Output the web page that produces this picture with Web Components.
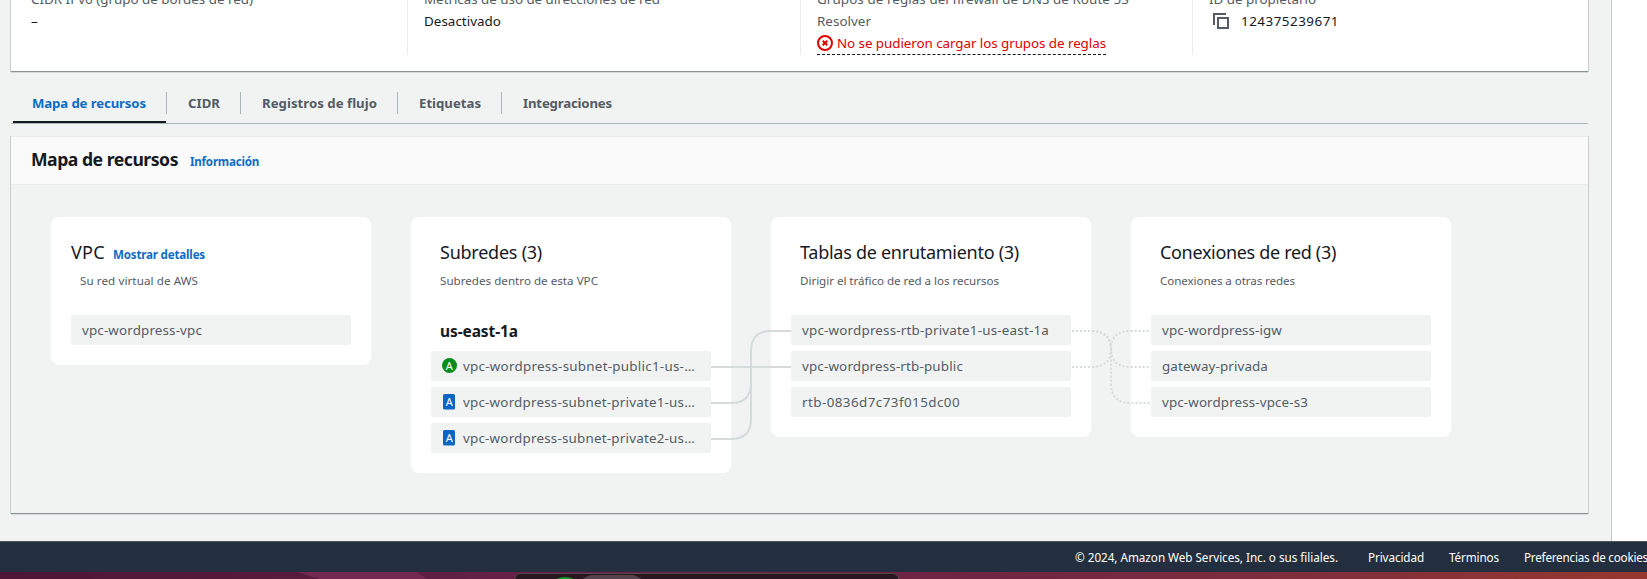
<!DOCTYPE html>
<html lang="es">
<head>
<meta charset="utf-8">
<title>Mapa de recursos</title>
<style>
html,body{margin:0;height:579px;overflow:hidden;background:#fff}
body{font-family:"Noto Sans","Open Sans",sans-serif;font-size:13.4px;line-height:22px;color:#16191f}
</style>
</head>
<body>
<console-page></console-page>
<script>
const define = (name, html, setup) => customElements.define(name, class extends HTMLElement {
  connectedCallback() {
    if (this.shadowRoot) return;
    const t = document.createElement('template');
    t.innerHTML = html;
    this.attachShadow({mode: 'open'}).append(t.content.cloneNode(true));
    if (setup) setup.call(this, this.shadowRoot);
  }
});

/* A single line of text whose tracking is adjusted to the width given in "w". */
define('fit-text', `<style>:host{display:inline-block;white-space:nowrap}span{display:inline-block}</style><span><slot></slot></span>`, function (root) {
  const span = root.querySelector('span'), w = +this.getAttribute('w');
  if (!w) return;
  const n = [...this.textContent].length;
  this.style.width = w + 'px';
  span.style.letterSpacing = (w - span.getBoundingClientRect().width) / n + 'px';
});

define('detail-column', `<style>
:host{display:block;box-sizing:border-box;height:67px;padding-left:16px;border-left:1px solid #eaeded;color:#16191f}
:host([first]){border:0;padding-left:20px}
::slotted(*){display:block!important;height:22px}
::slotted([label]){color:#545b64}
</style><slot></slot>`);

define('status-error', `<style>
:host{display:block;color:#df0000}
div{display:flex;width:289px;height:23px;box-sizing:border-box;gap:4px;border-bottom:1px dashed #16191f}
svg{flex:none;margin-top:3px}
</style><div><svg width="16" height="16" viewBox="0 0 16 16" fill="none" stroke="#df0000"><circle cx="8" cy="8" r="7" stroke-width="2"/><path d="M5.7 5.7l4.6 4.6M10.3 5.7l-4.6 4.6" stroke-width="2"/></svg><slot></slot></div>`);

define('copy-value', `<style>
:host{display:block}div{display:flex;gap:12px;padding-left:4px}svg{flex:none;margin-top:3px}
</style><div><svg width="16" height="16" viewBox="0 0 16 16" fill="none" stroke="#545b64" stroke-width="2"><path d="M5 5h10v10H5zM1 12V1h12"/></svg><slot></slot></div>`);

define('details-panel', `<style>
:host{display:grid;grid-template-columns:396px 393px 392px 396px;align-items:start;height:71px;overflow:hidden;background:#fff;box-shadow:-1px 0 0 #c9cfcf,1px 0 0 #c9cfcf,0 1px 0 #d5dbdb;border-bottom:1px solid #879596}
detail-column{margin-top:-12px}
</style>
<detail-column first><fit-text label w="222">CIDR IPv6 (grupo de bordes de red)</fit-text><fit-text>–</fit-text></detail-column>
<detail-column><fit-text label w="236">Métricas de uso de direcciones de red</fit-text><fit-text w="77">Desactivado</fit-text></detail-column>
<detail-column><fit-text label w="312">Grupos de reglas del firewall de DNS de Route 53</fit-text><fit-text label w="54">Resolver</fit-text><status-error><fit-text w="269">No se pudieron cargar los grupos de reglas</fit-text></status-error></detail-column>
<detail-column><fit-text label w="107">ID de propietario</fit-text><copy-value><fit-text w="98">124375239671</fit-text></copy-value></detail-column>`);

define('tab-item', `<style>
:host{display:flex;box-sizing:border-box;height:31px;color:#545b64;font-weight:700;font-size:13.2px}
div{padding:0 20px 0 21px;height:22px;border-right:1px solid #aab7b8}
:host([last]) div{border:0}
:host([active]){color:#0c6cc5;box-shadow:inset 0 -2px #16191f;width:153px;margin-left:2px;margin-right:1px}
:host([active]) div{padding:0 20px 0 19px;width:114px;flex:none}
</style><div><slot></slot></div>`);

define('tab-bar', `<style>:host{display:flex;box-sizing:border-box;height:32px;border-bottom:1px solid #aab7b8}</style>
<tab-item active><fit-text w="114">Mapa de recursos</fit-text></tab-item>
<tab-item><fit-text w="32">CIDR</fit-text></tab-item>
<tab-item><fit-text w="115">Registros de flujo</fit-text></tab-item>
<tab-item><fit-text w="62">Etiquetas</fit-text></tab-item>
<tab-item last><fit-text w="89">Integraciones</fit-text></tab-item>`);

define('resource-item', `<style>
:host{display:flex;align-items:center;box-sizing:border-box;height:30px;padding-left:11px;background:#f1f3f3;border-radius:2px;color:#545b64}
svg{flex:none;margin-right:6px}
text{font:11px "Noto Sans",sans-serif;fill:#fff}
</style><span id="i"></span><slot></slot>`, function (root) {
  const kind = this.getAttribute('kind');
  const shape = {public: '<circle cx="7.5" cy="7.5" r="7.5" fill="#078d1c"/>', private: '<rect x="1" width="12" height="15.5" rx="1.5" fill="#0a66c2"/>'}[kind];
  root.getElementById('i').style.display = 'contents';
  if (shape) root.getElementById('i').innerHTML = `<svg width="15" height="16" viewBox="0 0 15 16">${shape}<text x="7.3" y="11.7" text-anchor="middle">A</text></svg>`;
});

define('resource-card', `<style>
:host{display:block;box-sizing:border-box;width:320px;padding:22px 20px 20px;background:#fff;border-radius:8px}
.t{display:flex;align-items:baseline;gap:8px;height:26px;font-size:18px;line-height:26px;padding-left:9px}
.s{height:20px;margin-top:6px;font-size:11.6px;line-height:20px;color:#545b64;padding-left:9px}
:host([plain]) .t{padding-left:0}
.items{display:flex;flex-direction:column;gap:6px;margin-top:24px}
</style><div class="t"><slot name="title"></slot></div><div class="s"><slot name="subtitle"></slot></div><div class="items"><slot></slot></div>`);

define('resource-links', `<style>:host{display:block;position:absolute;left:0;top:0;pointer-events:none}svg{display:block}</style>
<svg width="1577" height="329" viewBox="11 185 1577 329" fill="none" stroke="#d5dbdb" stroke-width="2">
<path d="M711 367H791M711 403h20q20 0 20-20V351q0-20 20-20h20M711 439h20q20 0 20-20V351q0-20 20-20h20"/>
<g stroke-dasharray="2 2"><path d="M1072 331h19q20 0 20 18q0 18 20 18h20"/><path d="M1072 331h19q20 0 20 20v32q0 20 20 20h20"/><path d="M1072 367h19q20 0 20-18q0-18 20-18h20"/></g>
</svg>`);

define('resource-map', `<style>
:host{display:block;box-shadow:-1px 0 0 #c9cfcf,1px 0 0 #c9cfcf,0 1px 0 #d5dbdb;border-bottom:1px solid #879596;border-top:1px solid #eaeded}
header{display:flex;align-items:baseline;gap:12px;box-sizing:border-box;height:48px;padding:9px 20px 0;background:#fafafa;border-bottom:1px solid #eaeded}
h2{margin:0;font-size:17.6px;line-height:26px}
a{font-size:11.6px;line-height:20px;font-weight:700;color:#0c6cc5}
.map{position:relative;display:flex;align-items:flex-start;gap:40px;box-sizing:border-box;height:328px;padding:32px 40px}
h3{margin:0;padding:4px 0 1px 9px;font-size:15.5px;line-height:25px;height:25px}
</style>
<header><h2><fit-text w="147">Mapa de recursos</fit-text></h2><a><fit-text w="69">Información</fit-text></a></header>
<div class="map">
<resource-card plain><fit-text slot="title" w="34">VPC</fit-text><a slot="title"><fit-text w="92">Mostrar detalles</fit-text></a><fit-text slot="subtitle" w="118">Su red virtual de AWS</fit-text>
<resource-item><fit-text w="120">vpc-wordpress-vpc</fit-text></resource-item></resource-card>
<resource-card><fit-text slot="title" w="102">Subredes (3)</fit-text><fit-text slot="subtitle" w="158">Subredes dentro de esta VPC</fit-text>
<h3><fit-text w="78">us-east-1a</fit-text></h3>
<resource-item kind="public"><fit-text w="232">vpc-wordpress-subnet-public1-us-…</fit-text></resource-item>
<resource-item kind="private"><fit-text w="232">vpc-wordpress-subnet-private1-us…</fit-text></resource-item>
<resource-item kind="private"><fit-text w="232">vpc-wordpress-subnet-private2-us…</fit-text></resource-item></resource-card>
<resource-card><fit-text slot="title" w="219">Tablas de enrutamiento (3)</fit-text><fit-text slot="subtitle" w="199">Dirigir el tráfico de red a los recursos</fit-text>
<resource-item><fit-text w="247">vpc-wordpress-rtb-private1-us-east-1a</fit-text></resource-item>
<resource-item><fit-text w="161">vpc-wordpress-rtb-public</fit-text></resource-item>
<resource-item><fit-text w="158">rtb-0836d7c73f015dc00</fit-text></resource-item></resource-card>
<resource-card><fit-text slot="title" w="176">Conexiones de red (3)</fit-text><fit-text slot="subtitle" w="135">Conexiones a otras redes</fit-text>
<resource-item><fit-text w="120">vpc-wordpress-igw</fit-text></resource-item>
<resource-item><fit-text w="106">gateway-privada</fit-text></resource-item>
<resource-item><fit-text w="146">vpc-wordpress-vpce-s3</fit-text></resource-item></resource-card>
<resource-links></resource-links>
</div>`);

define('page-footer', `<style>
:host{display:flex;box-sizing:border-box;height:31px;padding:6px 0 0 1075px;border-top:1px solid #4b535c;background:#232f3e;color:#fff;font-size:11.7px;line-height:18px;overflow:hidden}
fit-text{flex:none;margin-right:25px}fit-text:first-of-type{margin-right:30px}
</style><fit-text w="263">© 2024, Amazon Web Services, Inc. o sus filiales.</fit-text><fit-text w="56">Privacidad</fit-text><fit-text w="50">Términos</fit-text><fit-text w="124">Preferencias de cookies</fit-text>`);

define('desktop-strip', `<style>:host{display:block;height:7px}svg{display:block}</style>
<svg width="1647" height="7" viewBox="0 0 1647 7"><defs><linearGradient id="g"><stop offset="0" stop-color="#4d1634"/><stop offset=".2" stop-color="#581b3c"/><stop offset=".3" stop-color="#642145"/><stop offset=".6" stop-color="#702542"/><stop offset=".8" stop-color="#802e3b"/><stop offset="1" stop-color="#97382f"/></linearGradient></defs>
<path fill="url(#g)" d="M0 0h1647v7H0z"/><path fill="#73284f" d="M297 0h120l10 7H319z"/>
<path fill="#291720" stroke="#57444c" d="M514.5 8q1-6.500 6-6.500H893q5 0 6 6.500z"/>
<path fill="#54434a" d="M583 7q5-4 10-4h38q5 0 10 4z"/><path fill="#0b9d1d" d="M556 7q9-4 18 0z"/></svg>`);

define('console-page', `<style>
:host{display:block;width:1647px;height:579px}
main{box-sizing:border-box;width:1612px;height:541px;padding:0 23px 0 11px;border-right:1px solid #c3c9c9;background:#f1f3f3}
tab-bar{margin-top:20px}
details-panel,resource-map{width:1577px}
resource-map{margin-top:12px}
</style><main><details-panel></details-panel><tab-bar></tab-bar><resource-map></resource-map></main><page-footer></page-footer><desktop-strip></desktop-strip>`);
</script>
</body>
</html>
